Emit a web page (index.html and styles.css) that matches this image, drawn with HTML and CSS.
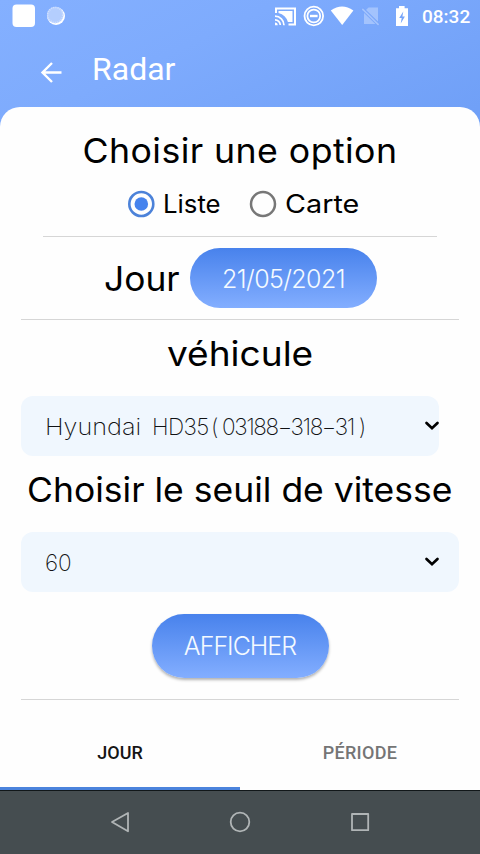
FILE: index.html
```html
<!DOCTYPE html>
<html lang="fr">
<head>
<meta charset="utf-8">
<title>Radar</title>
<link rel="stylesheet" href="styles.css">
</head>
<body>
<div class="app">
  <div class="status">
    <svg class="status-left" width="70" height="32" viewBox="0 0 70 32">
      <rect x="12.500" y="4.500" width="22.500" height="22.500" rx="4" fill="#fff"/>
      <circle cx="56" cy="16" r="9" fill="#fff"/>
      <circle cx="55.200" cy="15" r="8.300" fill="#b4cefe"/>
      <circle cx="55.200" cy="15" r="7.500" fill="none" stroke="#d0e0ff" stroke-width="1.500" stroke-dasharray="1.200 1"/>
    </svg>
    <svg class="status-right" width="140" height="32" viewBox="270 0 140 32">
      <g fill="none" stroke="#fff" stroke-width="2">
        <path d="M276 13V8.500h19V24.500h-6.500"/>
        <path d="M275 16.200a9 9 0 0 1 9 9M275 19.800a5.300 5.300 0 0 1 5.300 5.300" stroke-width="1.700"/>
        <circle cx="313.800" cy="16" r="9.300" stroke-width="1.800"/>
        <circle cx="313.800" cy="16" r="6.400" stroke-width="1.800"/>
      </g>
      <path d="M275 22.500a2.700 2.700 0 0 1 2.700 2.700H275zM278.500 11h14v11h-4.600a13 13 0 0 0-9.400-9z" fill="#fff"/>
      <path d="M310 14.800h7.600v2.400H310z" fill="#fff"/>
      <path d="M330.800 10.500Q342 2.500 353.400 10.500L342.200 25z" fill="#fff"/>
      <path d="M368.500 7.500H378V24h-14V12z" fill="#a3c3fd"/>
      <path d="M362 8.500l17 16.500" stroke="#76a4f9" stroke-width="3.500"/>
      <path d="M362.300 8.800l16.300 16" stroke="#a3c3fd" stroke-width="1.700"/>
      <path d="M399 6h5.600v2.300h3.400V26h-12V8.300h3z" fill="#fff"/>
      <path d="M403.300 11.500l-4.100 6.500h2.500l-1 5.500 4.200-7h-2.500z" fill="#76a4f9"/>
    </svg>
    <span class="clock">08:32</span>
  </div>
  <header class="bar">
    <svg class="back" width="24" height="24" viewBox="0 0 24 24"><path d="M21.500 12.500H2.500M12 3L2.500 12.500l9.500 9.500" fill="none" stroke="#fff" stroke-width="2.400"/></svg>
    <h1 class="app-title">Radar</h1>
  </header>
  <main class="card">
    <h2 class="heading option-title">Choisir une option</h2>
    <div class="radios">
      <svg width="28" height="28" viewBox="0 0 28 28"><circle cx="14.300" cy="14" r="12" fill="none" stroke="#4c82d9" stroke-width="2.600"/><circle cx="14.300" cy="14" r="6.800" fill="#4683ed"/></svg>
      <span class="radio-label liste">Liste</span>
      <svg width="28" height="28" viewBox="0 0 28 28"><circle cx="14" cy="14" r="12" fill="none" stroke="#777" stroke-width="2.500"/></svg>
      <span class="radio-label carte">Carte</span>
    </div>
    <hr class="rule rule-short">
    <div class="day">
      <span class="heading day-label">Jour</span>
      <button class="pill date">21/05/2021</button>
    </div>
    <hr class="rule">
    <h2 class="heading vehicle-title">véhicule</h2>
    <div class="select vehicle">
      <span class="vehicle-value"><span class="make">Hyundai</span> <span class="model">HD35</span> <span class="plate">( 03188−318−31 )</span></span>
      <svg width="16" height="12" viewBox="0 0 16 12"><path d="M2.500 3L8 8.200 13.500 3" fill="none" stroke="#000" stroke-width="2.700" stroke-linecap="round"/></svg>
    </div>
    <h2 class="heading speed-title">Choisir le seuil de vitesse</h2>
    <div class="select speed">
      <span class="speed-value">60</span>
      <svg width="16" height="12" viewBox="0 0 16 12"><path d="M2.500 3L8 8.200 13.500 3" fill="none" stroke="#000" stroke-width="2.700" stroke-linecap="round"/></svg>
    </div>
    <button class="pill submit">AFFICHER</button>
    <hr class="rule">
    <nav class="tabs">
      <span class="tab active">JOUR</span>
      <span class="tab period">PÉRIODE</span>
    </nav>
  </main>
  <footer class="nav">
    <svg width="480" height="63" viewBox="0 0 480 63" fill="none" stroke="#b0b5b6" stroke-width="1.800" stroke-linejoin="round">
      <path d="M112 31l16-9v18.300z"/>
      <circle cx="240" cy="31" r="9.300"/>
      <rect x="352" y="23" width="16.200" height="16.200"/>
    </svg>
  </footer>
</div>
</body>
</html>
```

FILE: styles.css
```css
* { box-sizing: border-box; }
body { margin: 0; }
.app {
  width: 480px;
  height: 854px;
  display: flex;
  flex-direction: column;
  overflow: hidden;
  font-family: Inter, "Liberation Sans", sans-serif;
  color: #000;
  background: linear-gradient(155deg, #84b0ff 0, #7eabfd 120px, #70a0f7 300px, #70a0f7 100%);
}
.status { height: 32px; display: flex; }
.status-right { margin-left: 200px; }
.clock {
  margin-left: 12px;
  font: 500 19px/33px Roboto, sans-serif;
  color: #fff;
}
.bar { height: 75px; display: flex; }
.back { margin: 28px 0 0 40px; }
.app-title {
  margin: 18px 0 0 28px;
  font: 400 32px/38px Roboto, sans-serif;
  color: #fff;
}
.card {
  height: 683px;
  display: flex;
  flex-direction: column;
  align-items: center;
  border-radius: 20px 20px 0 0;
  background: #fefefe;
}
.heading {
  margin: 0;
  font-size: 34px;
  font-weight: 400;
  line-height: 44px;
  white-space: nowrap;
}
.option-title { margin-top: 22px; letter-spacing: 0.4px; transform: scaleX(1.05); }
.radios {
  width: 100%;
  height: 28px;
  margin-top: 17px;
  padding-left: 127px;
  display: flex;
  align-items: center;
}
.radio-label {
  font-size: 25px;
  line-height: 28px;
  white-space: nowrap;
  transform-origin: left;
}
.liste { width: 86px; margin-left: 8px; transform: scaleX(1.03); }
.carte { margin-left: 8px; transform: scaleX(1.15); }
.rule {
  width: 438px;
  height: 1px;
  margin: 0;
  border: 0;
  background: #d6d6d6;
  flex: none;
}
.rule-short { width: 394px; margin-top: 18px; }
.day {
  width: 100%;
  height: 60px;
  margin: 11px 0;
  padding-left: 104px;
  display: flex;
  align-items: center;
}
.day-label { width: 86px; padding-top: 2px; transform: scaleX(1.04); transform-origin: left; }
.pill {
  padding: 0;
  border: 0;
  border-radius: 32px;
  background: linear-gradient(#4882ec, #83aeff);
  color: #f4faff;
  font-family: Inter, sans-serif;
  font-size: 25px;
  font-weight: 300;
  white-space: nowrap;
}
.date { width: 187px; height: 60px; padding-top: 2px; letter-spacing: -0.6px; }
.vehicle-title { margin-top: 12px; transform: scaleX(1.09); }
.select {
  width: 438px;
  height: 60px;
  padding: 0 19px 0 24px;
  display: flex;
  align-items: center;
  justify-content: space-between;
  border-radius: 12px;
  background: #f0f7fe;
  font-size: 22.5px;
  font-weight: 200;
  line-height: 30px;
  color: #101214;
  white-space: nowrap;
}
.vehicle { width: 418px; margin: 20px 20px 0 0; padding-right: 0; }
.vehicle svg { margin-right: -1px; }
.vehicle-value { display: flex; padding-top: 2px; }
.speed-value { padding-top: 2px; }
.make { width: 107px; transform: scaleX(1.12); transform-origin: left; }
.model { width: 59px; letter-spacing: -0.6px; }
.plate { letter-spacing: -1.4px; }
.speed-title { margin-top: 12px; transform: scaleX(1.044); }
.speed { margin-top: 20px; }
.submit {
  width: 177px;
  height: 64px;
  margin: 22px 0 21px;
  letter-spacing: -1px;
  box-shadow: 0 2px 3px rgba(0, 0, 0, 0.3);
}
.tabs { width: 100%; flex: 1; display: flex; }
.tab {
  width: 240px;
  padding-top: 37px;
  text-align: center;
  font: 500 18px/32px Roboto, sans-serif;
  color: #757575;
}
.period { letter-spacing: 0.3px; }
.active { color: #151515; border-bottom: 3px solid #4b83dc; }
.nav { height: 64px; border-top: 1px solid #111719; background: #454d50; }
```
